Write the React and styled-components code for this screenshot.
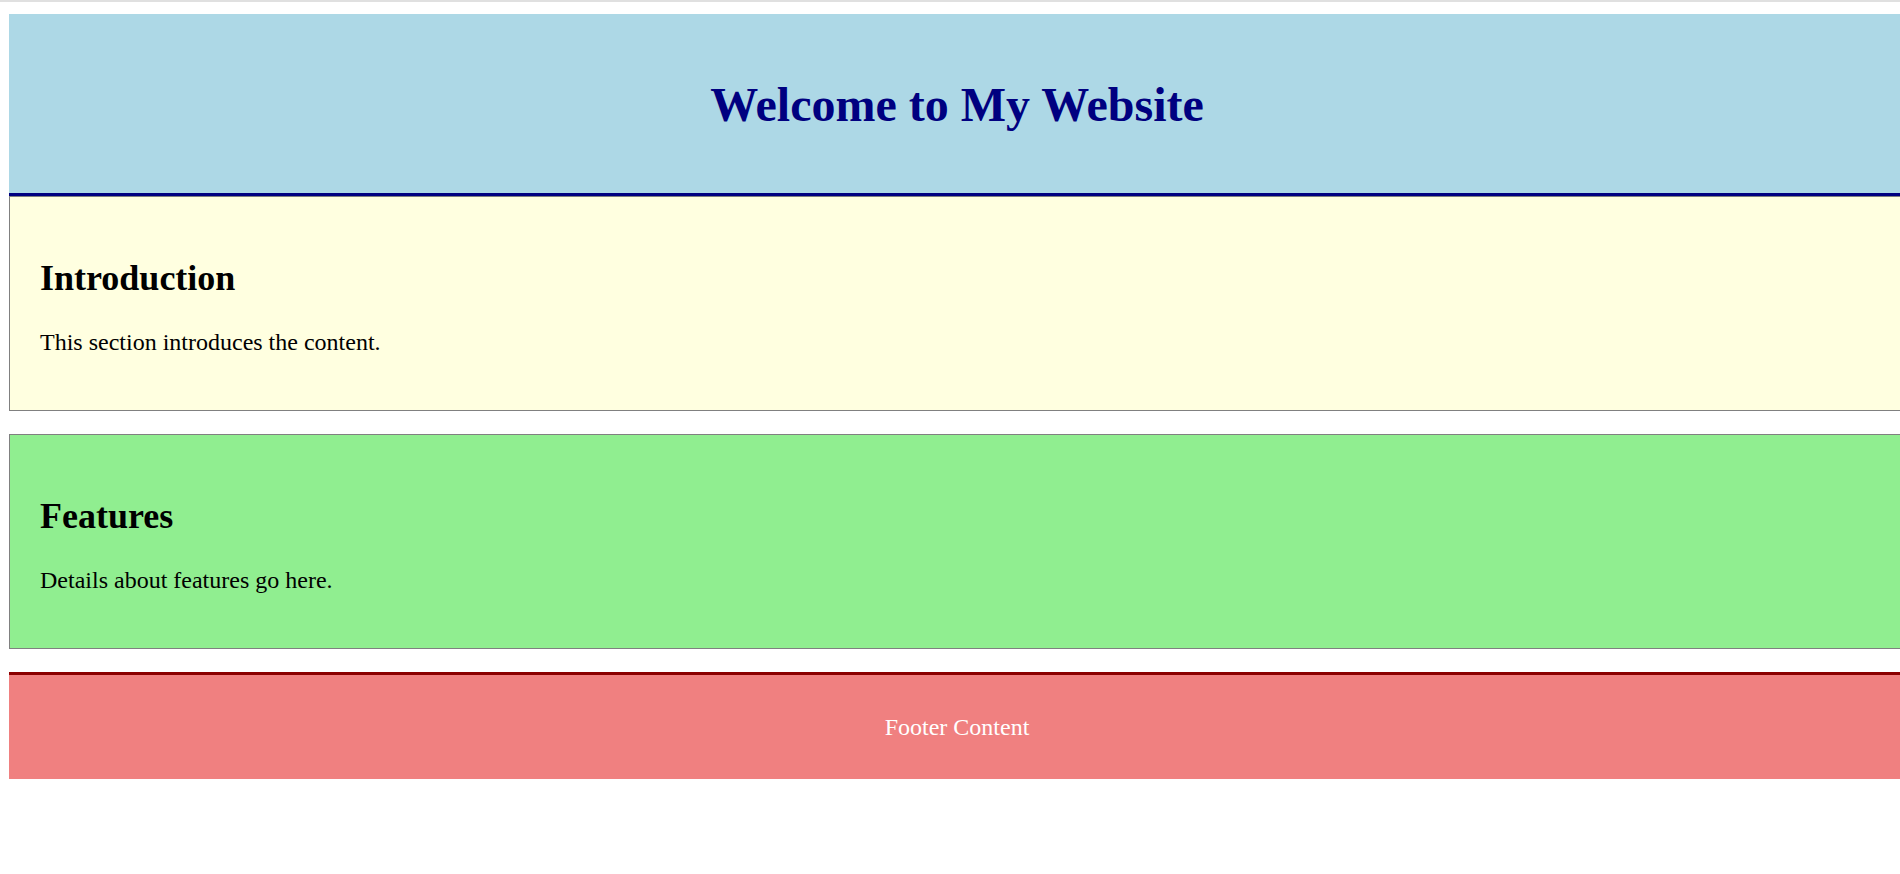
import styled, { createGlobalStyle } from 'styled-components'

const GlobalStyle = createGlobalStyle`
    html, body {
        margin: 0;
        padding: 0;
        background: #ffffff;
        overflow: hidden;
    }
    body {
        font-family: "Liberation Serif", "Times New Roman", serif;
        font-size: 24px;
    }
`

const TopBar = styled.div`
    height: 2px;
    background-color: #e0e0e0;
`

const Page = styled.div`
    width: 1896px;
    margin: 12px 0 0 9px;
`

const Header = styled.header`
    background-color: #add8e6;
    border-bottom: 3px solid #000080;
    padding: 31px 0 29px;
    text-align: center;
`

const Title = styled.h1`
    color: #000080;
    font-size: 48px;
    font-weight: bold;
    margin: 32px 0;
`

const Section = styled.section`
    background-color: ${(props) => props.$bg};
    border: 1px solid #808080;
    padding: 30px;
    margin-bottom: 23px;
`

const SectionTitle = styled.h2`
    font-size: 36px;
    font-weight: bold;
    margin: 30px 0;
`

const SectionText = styled.p`
    font-size: 24px;
    margin: 24px 0;
`

const Footer = styled.footer`
    background-color: #f08080;
    border-top: 3px solid #8b0000;
    color: #ffffff;
    text-align: center;
    padding: 39px 0 38px;
    font-size: 24px;
`

const sections = [
    { title: 'Introduction', text: 'This section introduces the content.', bg: '#ffffe0' },
    { title: 'Features', text: 'Details about features go here.', bg: '#90ee90' },
]

function App() {
    return (
        <>
            <GlobalStyle />
            <TopBar />
            <Page>
                <Header>
                    <Title>Welcome to My Website</Title>
                </Header>
                {sections.map((section) => (
                    <Section key={section.title} $bg={section.bg}>
                        <SectionTitle>{section.title}</SectionTitle>
                        <SectionText>{section.text}</SectionText>
                    </Section>
                ))}
                <Footer>Footer Content</Footer>
            </Page>
        </>
    )
}

export default App
